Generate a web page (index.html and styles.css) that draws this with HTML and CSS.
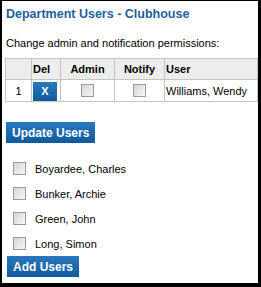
FILE: index.html
```html
<!DOCTYPE html>
<html>
  <head>
    <title>Department Users</title>
    <link rel="stylesheet" href="styles.css">
  </head>
  <body>
    <div class="frame">
      <h1 class="title">Department Users - Clubhouse</h1>
      <p class="intro">Change admin and notification permissions:</p>

      <table class="users">
        <tr class="head">
          <th class="num"></th>
          <th class="del">Del</th>
          <th class="admin">Admin</th>
          <th class="notify">Notify</th>
          <th class="user">User</th>
        </tr>
        <tr>
          <td class="num">1</td>
          <td class="del"><button class="x">X</button></td>
          <td class="admin"><input type="checkbox" class="box"></td>
          <td class="notify"><input type="checkbox" class="box"></td>
          <td class="user">Williams, Wendy</td>
        </tr>
      </table>

      <button class="btn update">Update Users</button>

      <ul class="add-list">
        <li><input type="checkbox" class="box"><span>Boyardee, Charles</span></li>
        <li><input type="checkbox" class="box"><span>Bunker, Archie</span></li>
        <li><input type="checkbox" class="box"><span>Green, John</span></li>
        <li><input type="checkbox" class="box"><span>Long, Simon</span></li>
      </ul>

      <button class="btn add">Add Users</button>
    </div>
  </body>
</html>
```

FILE: styles.css
```css
body { margin: 0; font-family: "Liberation Sans", Arial, sans-serif; font-size: 11px; color: #000; }

.frame { width: 261px; height: 287px; box-sizing: border-box; border-style: solid; border-color: #000; border-width: 1px 3px 4px 2px; background: #fff; overflow: hidden; }

.title { margin: 5px 0 0 4px; font-size: 12.5px; line-height: 16px; color: #1f5f9c; }
.intro { margin: 14px 0 0 4px; font-size: 11px; line-height: 14px; }

.users { margin: 8px 0 0 3px; width: 253px; border-collapse: collapse; table-layout: fixed; }
.users th, .users td { border: 1px solid #c4c4c4; height: 20px; padding: 0; font-size: 11px; }
.users .head th { background: #ededed; font-weight: bold; text-align: center; }
.users th.user, .users td.user { text-align: left; padding-left: 1px; }
.users th.num { width: 25px; }
.users th.del { width: 27px; text-align: left; padding-left: 1px; }
.users th.admin { width: 53px; }
.users th.notify { width: 49px; }
.users td { text-align: center; }
.users td.del { padding: 1px 2px 0 1px; }

.x { display: block; width: 24px; height: 19px; margin: 0; padding: 0; border: none; background: linear-gradient(#2b78bd, #105c9f); color: #fff; font: bold 11px "Liberation Sans", Arial, sans-serif; }

.box { appearance: none; -webkit-appearance: none; width: 13px; height: 13px; margin: 0; vertical-align: middle; border: 1px solid #9a9a9a; background: linear-gradient(135deg, #d6d6d6, #f6f6f6); box-sizing: border-box; }

.btn { display: block; height: 21px; padding: 0 6px; border: none; background: linear-gradient(#2a78bd, #0f5a9d); color: #fff; font: bold 12px "Liberation Sans", Arial, sans-serif; }
.update { margin: 20px 0 0 4px; }
.add { margin: 0 0 0 5px; }

.add-list { list-style: none; margin: 13px 0 0; padding: 0 0 0 11px; }
.add-list li { display: flex; align-items: center; gap: 9px; height: 25px; font-size: 11px; }
```
